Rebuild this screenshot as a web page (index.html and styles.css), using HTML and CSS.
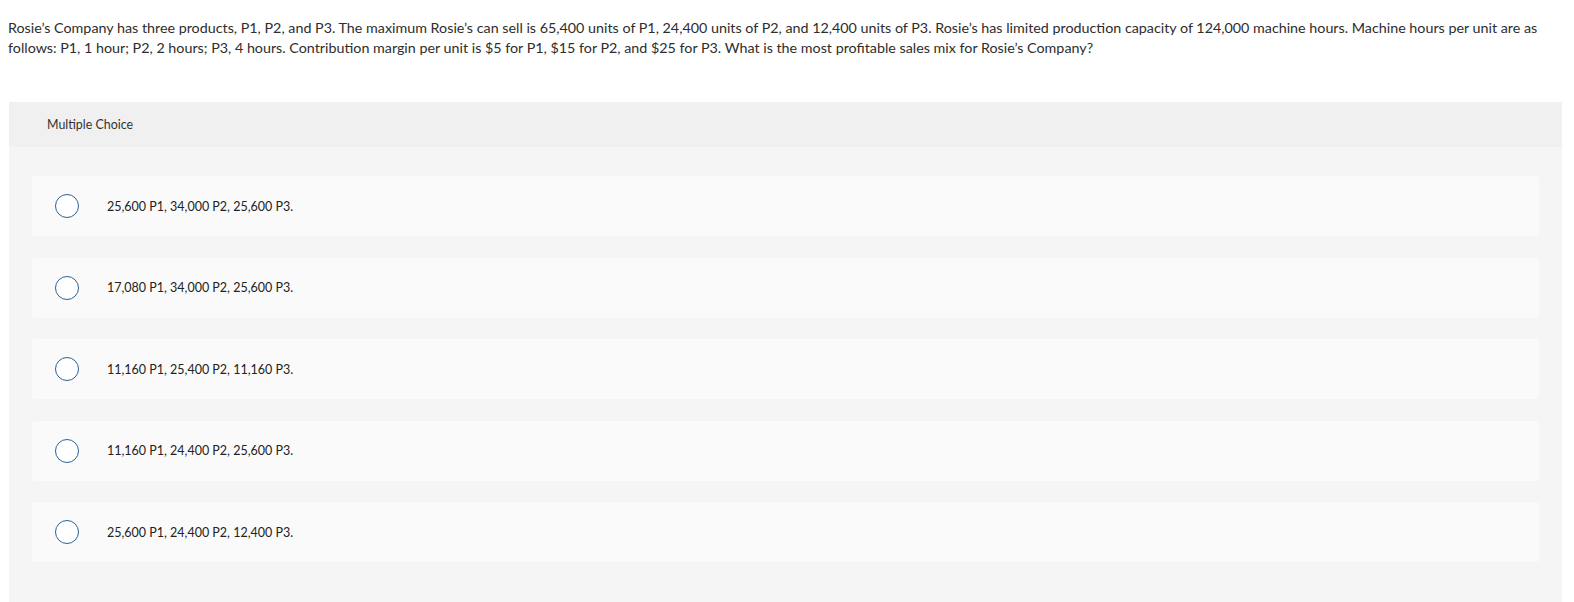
FILE: index.html
```html
<!DOCTYPE html>
<html>
<head>
<meta charset="utf-8">
<link rel="stylesheet" href="styles.css">
</head>
<body>
<p class="question">Rosie’s Company has three products, P1, P2, and P3. The maximum Rosie’s can sell is 65,400 units of P1, 24,400 units of P2, and 12,400 units of P3. Rosie’s has limited production capacity of 124,000 machine hours. Machine hours per unit are as follows: P1, 1 hour; P2, 2 hours; P3, 4 hours. Contribution margin per unit is $5 for P1, $15 for P2, and $25 for P3. What is the most profitable sales mix for Rosie’s Company?</p>
<section class="panel">
  <div class="panel-head">Multiple Choice</div>
  <div class="panel-body">
    <div class="option"><span class="radio"></span><span class="label">25,600 P1, 34,000 P2, 25,600 P3.</span></div>
    <div class="option"><span class="radio"></span><span class="label">17,080 P1, 34,000 P2, 25,600 P3.</span></div>
    <div class="option"><span class="radio"></span><span class="label">11,160 P1, 25,400 P2, 11,160 P3.</span></div>
    <div class="option"><span class="radio"></span><span class="label">11,160 P1, 24,400 P2, 25,600 P3.</span></div>
    <div class="option"><span class="radio"></span><span class="label">25,600 P1, 24,400 P2, 12,400 P3.</span></div>
  </div>
</section>
</body>
</html>
```

FILE: styles.css
```css
html, body {
  margin: 0;
  padding: 0;
  background: #fff;
}
body {
  font-family: Lato, "Liberation Sans", sans-serif;
  color: #333;
  padding: 0 10px 0 8px;
}
.question {
  margin: 0;
  padding-top: 18px;
  font-size: 14.3px;
  line-height: 20px;
  color: #2d2d2d;
}
.panel {
  margin: 44px 2px 0 1px;
}
.panel-head {
  background: #f0f0f0;
  height: 45px;
  display: flex;
  align-items: center;
  padding-left: 38px;
  font-size: 12.4px;
  color: #333;
}
.panel-body {
  background: #f5f5f5;
  padding: 29px 23px 44px 23px;
  display: flex;
  flex-direction: column;
  gap: 21.5px;
}
.option {
  background: #fafafa;
  border-radius: 4px;
  height: 60px;
  display: flex;
  align-items: center;
  padding-left: 23px;
}
.radio {
  width: 22px;
  height: 22px;
  border: 1.5px solid #2d5f93;
  border-radius: 50%;
  background: #fff;
  flex: none;
}
.label {
  margin-left: 28px;
  font-size: 12.5px;
  color: #222;
}
```
